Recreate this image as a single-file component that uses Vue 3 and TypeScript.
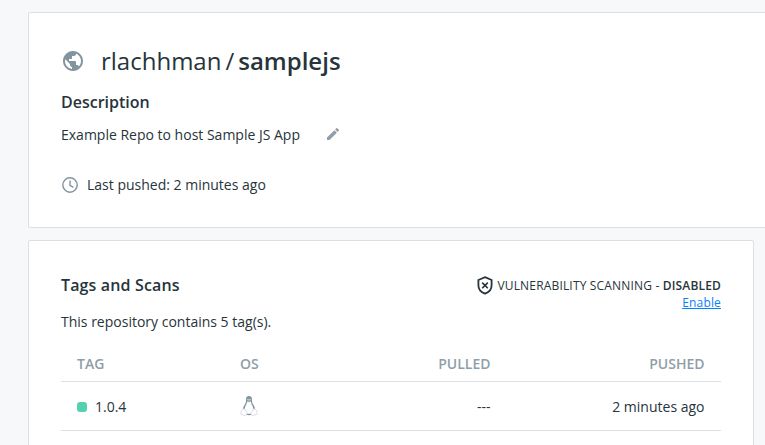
<script setup lang="ts">
interface TagRow {
  name: string
  pulled: string
  pushed: string
}

const owner = 'rlachhman'
const repository = 'samplejs'
const tagCount = 5
const tags: TagRow[] = [{ name: '1.0.4', pulled: '---', pushed: '2 minutes ago' }]
</script>

<template>
  <main class="page">
    <section class="card summary">
      <h1 class="title">
        <svg class="globe" viewBox="0 0 24 24" aria-hidden="true">
          <path d="M12 2C6.48 2 2 6.48 2 12s4.48 10 10 10 10-4.48 10-10S17.52 2 12 2zm-1 17.93c-3.95-.49-7-3.85-7-7.93 0-.62.08-1.21.21-1.79L9 15v1c0 1.1.9 2 2 2v1.93zm6.9-2.54c-.26-.81-1-1.39-1.9-1.39h-1v-3c0-.55-.45-1-1-1H8v-2h2c.55 0 1-.45 1-1V7h2c1.1 0 2-.9 2-2v-.41c2.93 1.19 5 4.06 5 7.41 0 2.08-.8 3.97-2.1 5.39z" />
        </svg>
        <span class="owner">{{ owner }}</span>
        <span class="slash">/</span>
        <strong class="repo">{{ repository }}</strong>
      </h1>
      <h2 class="heading">Description</h2>
      <div class="description">
        <span>Example Repo to host Sample JS App</span>
        <svg class="pencil" viewBox="0 0 24 24" aria-hidden="true">
          <path d="M3 17.25V21h3.75L17.81 9.94l-3.75-3.75L3 17.25zM20.71 7.04a1 1 0 0 0 0-1.41l-2.34-2.34a1 1 0 0 0-1.41 0l-1.83 1.83 3.75 3.75 1.83-1.83z" />
        </svg>
      </div>
      <div class="last-pushed">
        <svg class="clock" viewBox="0 0 18 18" aria-hidden="true">
          <circle cx="9" cy="9" r="7.2" />
          <path d="M9 4.6V9.3l3.4 2.1" />
        </svg>
        <span>Last pushed: 2 minutes ago</span>
      </div>
    </section>

    <section class="card tags">
      <header class="tags-header">
        <h2 class="heading">Tags and Scans</h2>
        <div class="scanning">
          <div class="scan-status">
            <svg class="shield" viewBox="0 0 16 19" aria-hidden="true">
              <path d="M8 1.2 14.6 4V9.2C14.6 13 12 16.2 8 17.7 4 16.2 1.4 13 1.4 9.2V4Z" />
              <path class="cross" d="M5.2 6.6 10.8 12.2M10.8 6.6 5.2 12.2" />
            </svg>
            <span>VULNERABILITY SCANNING - <strong>DISABLED</strong></span>
          </div>
          <a class="enable">Enable</a>
        </div>
      </header>
      <p class="count">This repository contains {{ tagCount }} tag(s).</p>
      <table class="table">
        <thead>
          <tr>
            <th class="col-tag">TAG</th>
            <th class="col-os">OS</th>
            <th class="col-pulled">PULLED</th>
            <th class="col-pushed">PUSHED</th>
          </tr>
        </thead>
        <tbody>
          <tr v-for="tag in tags" :key="tag.name">
            <td>
              <span class="tag-name"><i class="dot"></i>{{ tag.name }}</span>
            </td>
            <td>
              <svg class="linux" viewBox="0 0 18 22" aria-label="Linux">
                <path class="tux-body" d="M9 1C6.9 1 5.9 2.5 6 4.5c.1 2.2 0 3.1-1.2 5-1.3 2-2.3 4-2 6.3.2 2.5 2.5 4.4 6.2 4.4s6-1.9 6.2-4.4c.3-2.3-.7-4.3-2-6.3-1.2-1.9-1.3-2.8-1.2-5C12.1 2.5 11.1 1 9 1Z" />
                <path class="tux-belly" d="M7.2 6.4 9 7.2l1.8-.8c.2 2 1.3 3.6 2 5.4 1.1 2.5.7 5.5-1 7H6.2c-1.7-1.5-2.1-4.5-1-7 .7-1.8 1.8-3.4 2-5.4Z" />
                <path class="tux-face" d="M7 4.6h4M7.5 6h3" />
                <path class="tux-foot" d="m3.2 13.7 1.6.6 2 3.2c.6 1.1.1 2.4-1 2.8-1.4.4-2.8-.5-4.4-.9-.8-.2-.8-.9-.5-1.6.4-.8-.1-1.9.6-2.3.8-.4 1.1-1.1 1.7-1.8Z" />
                <path class="tux-foot" d="m14.8 13.7-1.6.6-2 3.2c-.6 1.1-.1 2.4 1 2.8 1.4.4 2.8-.5 4.4-.9.8-.2.8-.9.5-1.6-.4-.8.1-1.9-.6-2.3-.8-.4-1.1-1.1-1.7-1.8Z" />
              </svg>
            </td>
            <td class="right">{{ tag.pulled }}</td>
            <td class="right">{{ tag.pushed }}</td>
          </tr>
        </tbody>
      </table>
    </section>
  </main>
</template>

<style>
body {
  background: #f7f8fa;
  overflow: hidden;
}
</style>

<style scoped>
.page {
  box-sizing: border-box;
  height: 445px;
  padding: 12px 0 0 28px;
  display: flex;
  flex-direction: column;
  gap: 12px;
  overflow: hidden;
  font: 14px/20px "Open Sans", "Noto Sans", sans-serif;
  color: #27343b;
}
.card {
  box-sizing: border-box;
  flex: none;
  background: #fff;
  border: 1px solid #dcdfe3;
  border-radius: 2px;
  padding: 32px;
}
.summary {
  height: 216px;
  padding-top: 31px;
  border-right: 0;
  border-radius: 2px 0 0 2px;
}
.tags {
  width: 726px;
  height: 300px;
}
svg {
  display: block;
  flex: none;
}
.title {
  display: flex;
  align-items: center;
  height: 34px;
  margin: 0;
  font-size: 24px;
  line-height: 34px;
  font-weight: 400;
}
.globe {
  width: 24px;
  height: 24px;
  margin-right: 16px;
  margin-top: -1px;
  fill: #82949e;
}
.slash {
  margin: 0 4px;
}
strong {
  font-weight: 600;
}
.heading {
  margin: 0;
  font-size: 16px;
  line-height: 24px;
  font-weight: 600;
}
.summary .heading {
  margin-top: 12px;
}
.tags .heading {
  letter-spacing: 0.14px;
}
.description {
  display: flex;
  align-items: center;
  margin-top: 11px;
}
.pencil {
  width: 16px;
  height: 16px;
  margin-left: 25px;
  margin-top: -2px;
  fill: #8f9ea8;
}
.last-pushed {
  display: flex;
  align-items: center;
  gap: 8px;
  margin-top: 30px;
}
.clock {
  width: 18px;
  height: 18px;
  fill: none;
  stroke: #82949e;
  stroke-width: 1.4;
}
.tags-header {
  display: flex;
  justify-content: space-between;
  height: 39px;
}
.scanning {
  display: flex;
  flex-direction: column;
  align-items: flex-end;
  padding-top: 3px;
  font-size: 12px;
  line-height: 17px;
  letter-spacing: 0.17px;
}
.scan-status {
  display: flex;
  align-items: center;
  gap: 4px;
  height: 18px;
}
.shield {
  width: 16px;
  height: 19px;
  margin-top: 1px;
  fill: none;
  stroke: #27343b;
  stroke-width: 1.8;
}
.cross {
  stroke-width: 1.6;
}
.enable {
  color: #087fff;
  text-decoration: underline;
}
.count {
  margin: 0 0 12px;
}
.table {
  width: 660px;
  table-layout: fixed;
  border-collapse: separate;
  border-spacing: 0;
}
.table th {
  box-sizing: border-box;
  height: 38px;
  padding: 2px 16.5px 0 16px;
  border-bottom: 1px solid #dcdfe3;
  color: #8f9ea8;
  font-weight: 600;
  text-align: left;
}
.table td {
  box-sizing: border-box;
  height: 49px;
  padding: 2px 16.5px 0 16px;
  border-bottom: 1px solid #dcdfe3;
}
.col-tag {
  width: 163px;
}
.col-os {
  width: 120px;
}
.col-pulled {
  width: 163px;
}
.table .col-pulled,
.table .col-pushed,
.table .right {
  text-align: right;
}
.tag-name {
  display: flex;
  align-items: center;
  gap: 8px;
}
.dot {
  width: 10px;
  height: 10px;
  border-radius: 3px;
  background: #54d2b0;
}
.linux {
  width: 18px;
  height: 22px;
  margin-top: -2px;
}
.tux-body {
  fill: #82949e;
}
.tux-belly {
  fill: #fff;
}
.tux-face {
  fill: none;
  stroke: #c9d1d6;
  stroke-width: 0.9;
}
.tux-foot {
  fill: #fff;
  stroke: #c5cdd2;
  stroke-width: 0.7;
}
</style>
